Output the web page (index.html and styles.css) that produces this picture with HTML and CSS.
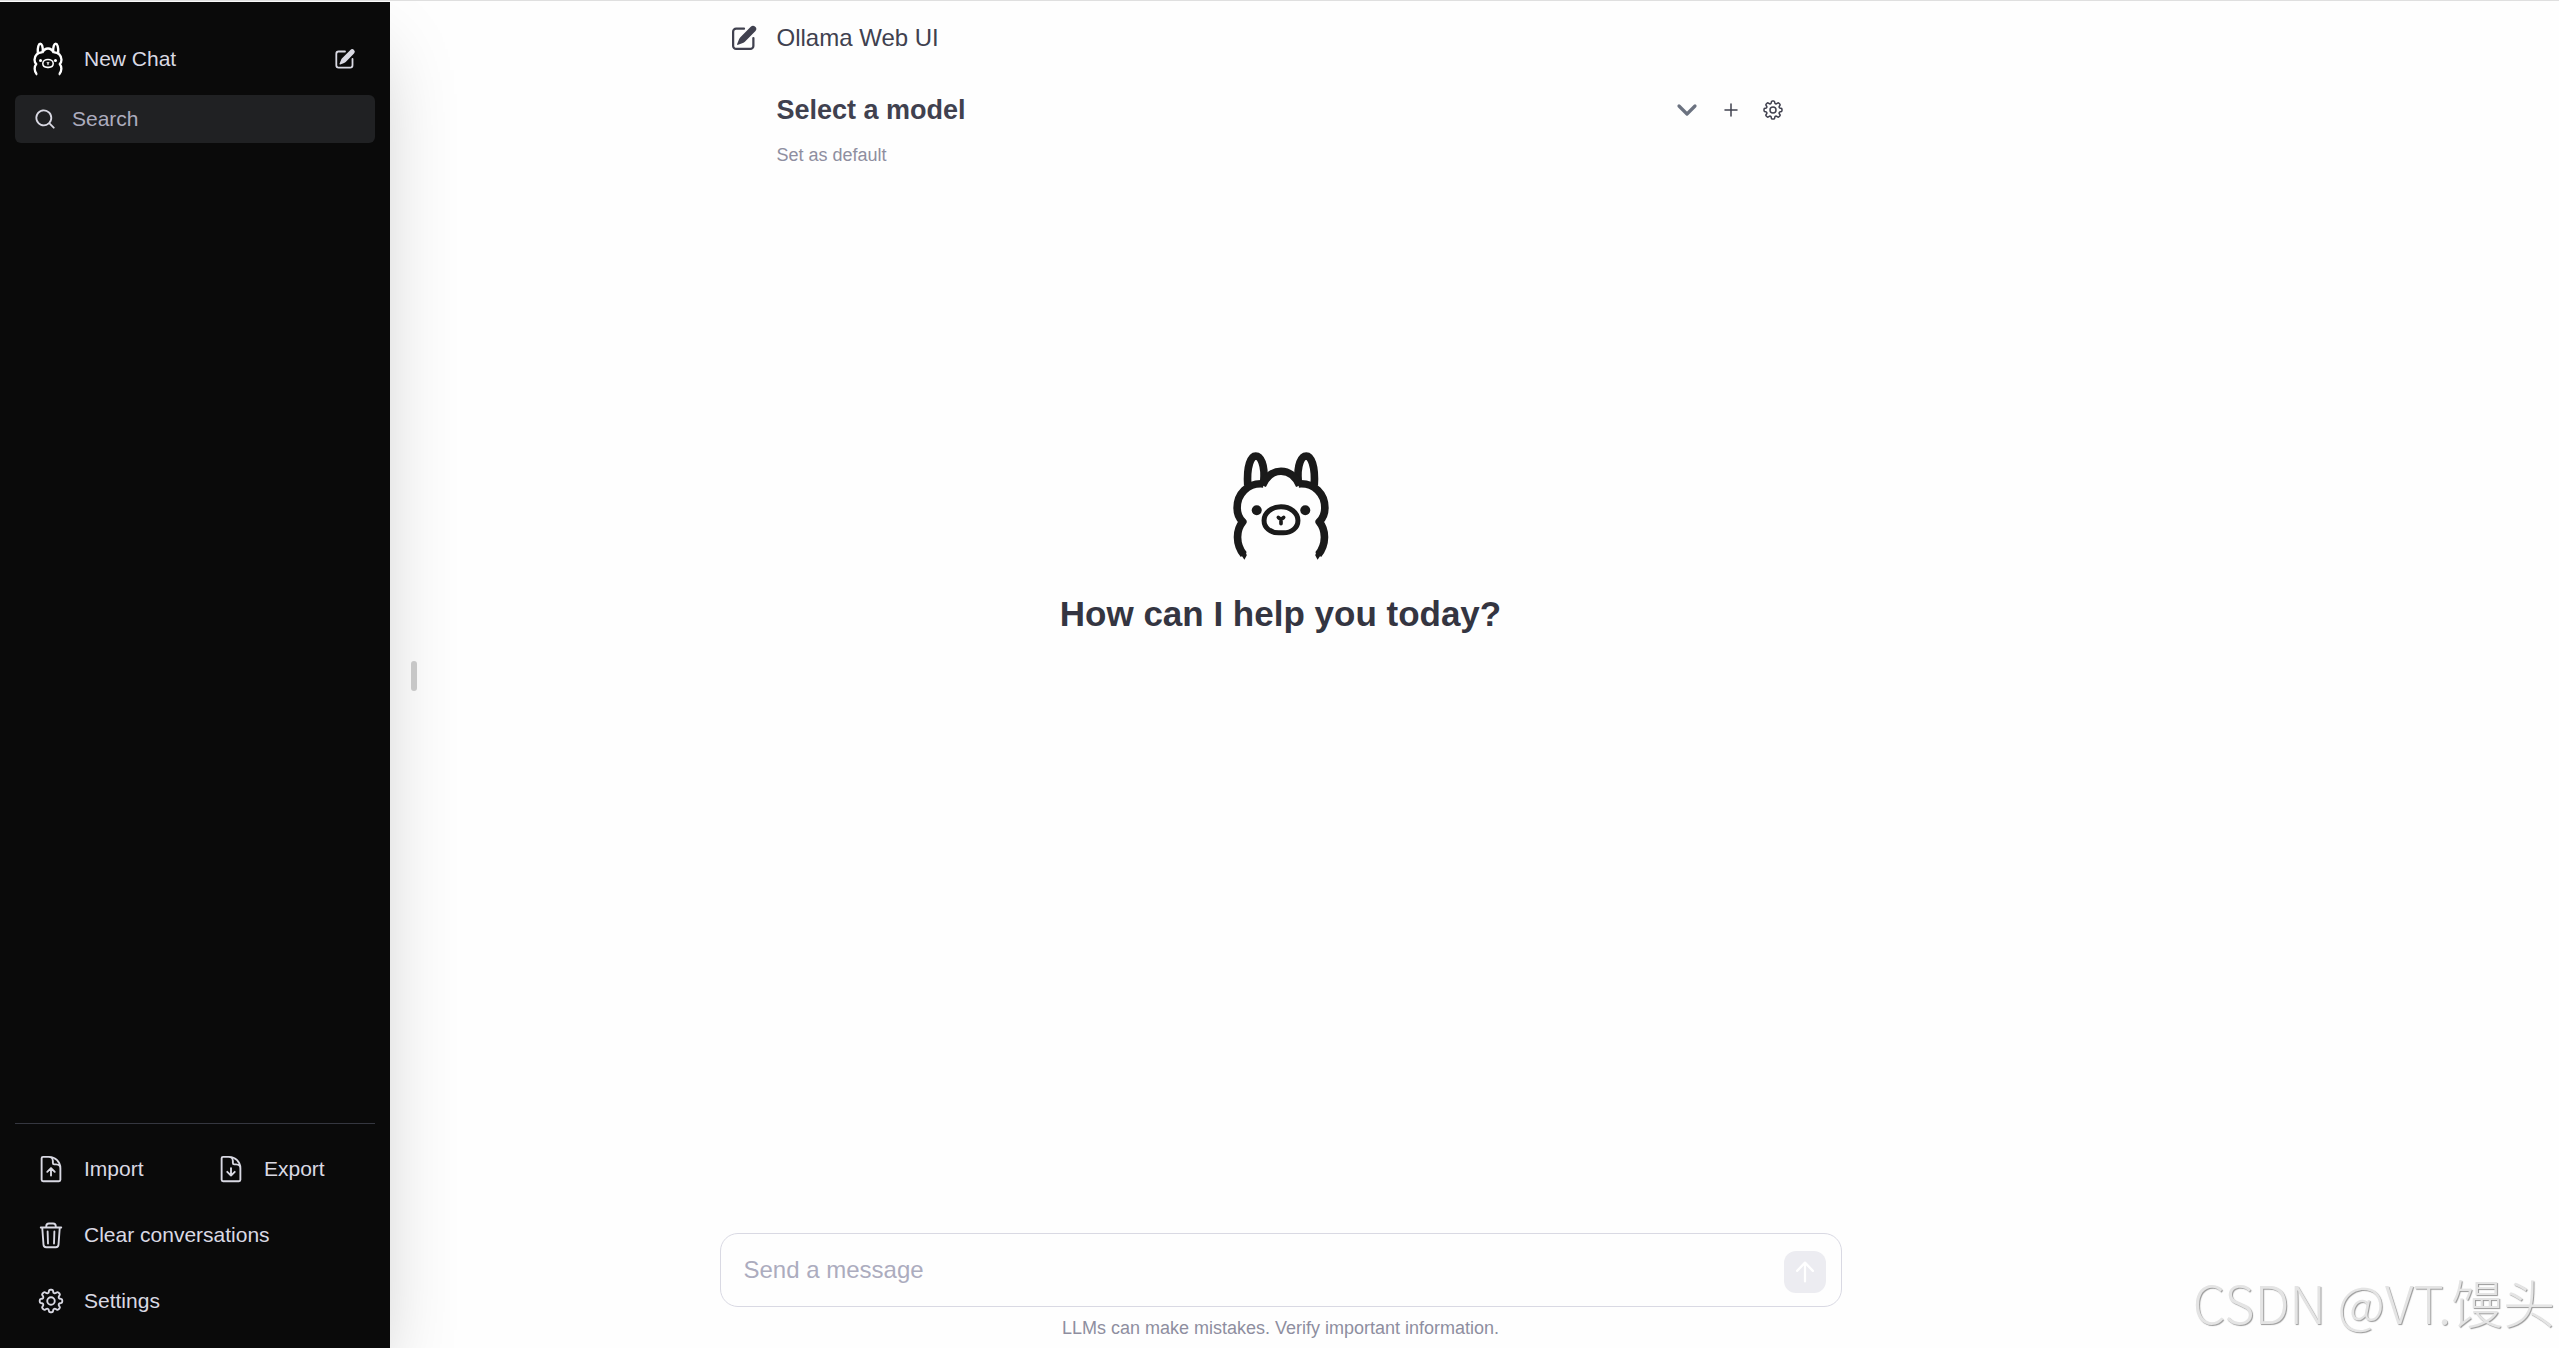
FILE: index.html
```html
<!DOCTYPE html>
<html lang="en">
<head>
    <meta charset="UTF-8">
    <meta name="viewport" content="width=device-width, initial-scale=1.0">
    <title>Ollama Web UI</title>
    <link rel="stylesheet" href="styles.css">
</head>
<body>
    <!-- Shared icons -->
    <svg class="sprite" aria-hidden="true">
        <symbol id="llama" viewBox="576 64 294 328">
            <g fill="none" stroke="currentColor" stroke-width="23" stroke-linejoin="round">
                <path d="M623 168C619 108 633 79 647 79C661 79 676 104 671 158"/>
                <path d="M823 168C827 108 813 79 799 79C785 79 770 104 775 158"/>
                <path d="M667 168C679 140 700 125 723 125C746 125 767 140 779 168"/>
                <path d="M670 163C622 159 591 194 591 235C591 253 597 267 608 277C587 302 586 345 611 376"/>
                <path d="M776 163C824 159 855 194 855 235C855 253 849 267 838 277C859 302 860 345 835 376"/>
                <path stroke-width="15" d="M723 232C695 232 672 250 672 273C672 295 691 310 716 310H730C755 310 774 295 774 273C774 250 751 232 723 232Z"/>
                <path stroke-width="11" stroke-linecap="round" d="M715 264L723 270L731 264M723 270V283"/>
            </g>
            <g fill="currentColor">
                <circle cx="650" cy="242" r="15"/>
                <circle cx="796" cy="242" r="15"/>
                <path d="M601 374L613 391L620 378L616 366ZM845 374L833 391L826 378L830 366Z"/>
            </g>
        </symbol>
        <symbol id="pencil" viewBox="0 0 20 20">
            <path fill="currentColor" d="M5.433 13.917l1.262-3.155A4 4 0 017.58 9.42l6.92-6.918a2.121 2.121 0 013 3l-6.92 6.918c-.383.383-.84.685-1.343.886l-3.154 1.262a.5.5 0 01-.65-.65z"/>
            <path fill="currentColor" d="M3.5 5.75c0-.69.56-1.25 1.25-1.25H10A.75.75 0 0010 3H4.75A2.75 2.75 0 002 5.75v9.5A2.75 2.75 0 004.75 18h9.5A2.75 2.75 0 0017 15.25V10a.75.75 0 00-1.5 0v5.25c0 .69-.56 1.25-1.25 1.25h-9.5c-.69 0-1.25-.56-1.25-1.25v-9.5z"/>
        </symbol>
        <symbol id="cog" viewBox="0 0 24 24">
            <path fill="none" stroke="currentColor" stroke-width="1.5" stroke-linejoin="round" d="M10.343 3.94c.09-.542.56-.94 1.11-.94h1.093c.55 0 1.02.398 1.11.94l.149.894c.07.424.384.764.78.93.398.164.855.142 1.205-.108l.737-.527a1.125 1.125 0 011.45.12l.773.774c.39.389.44 1.002.12 1.45l-.527.737c-.25.35-.272.806-.107 1.204.165.397.505.71.93.78l.893.15c.543.09.94.56.94 1.109v1.094c0 .55-.397 1.02-.94 1.11l-.893.149c-.425.07-.765.383-.93.78-.165.398-.143.854.107 1.204l.527.738c.32.447.269 1.06-.12 1.45l-.774.773a1.125 1.125 0 01-1.449.12l-.738-.527c-.35-.25-.806-.272-1.203-.107-.397.165-.71.505-.781.929l-.149.894c-.09.542-.56.94-1.11.94h-1.094c-.55 0-1.019-.398-1.11-.94l-.148-.894c-.071-.424-.384-.764-.781-.93-.398-.164-.854-.142-1.204.108l-.738.527c-.447.32-1.06.269-1.45-.12l-.773-.774a1.125 1.125 0 01-.12-1.45l.527-.737c.25-.35.273-.806.108-1.204-.165-.397-.505-.71-.93-.78l-.894-.15c-.542-.09-.94-.56-.94-1.109v-1.094c0-.55.398-1.02.94-1.11l.894-.149c.424-.07.765-.383.93-.78.165-.398.143-.854-.107-1.204l-.527-.738a1.125 1.125 0 01.12-1.45l.773-.773a1.125 1.125 0 011.45-.12l.737.527c.35.25.807.272 1.204.107.397-.165.71-.505.78-.929l.15-.894z"/>
            <circle cx="12" cy="12" r="3" fill="none" stroke="currentColor" stroke-width="1.5"/>
        </symbol>
    </svg>

    <div class="app">
        <aside class="sidebar">
            <button class="new-chat">
                <svg class="logo-small"><use href="#llama"/></svg>
                <span>New Chat</span>
                <svg class="icon-sm push"><use href="#pencil"/></svg>
            </button>
            <label class="search">
                <svg class="icon-sm" viewBox="0 0 20 20" fill="currentColor"><path d="M9 3.5a5.5 5.5 0 100 11 5.5 5.5 0 000-11zM2 9a7 7 0 1112.452 4.391l3.328 3.329a.75.75 0 11-1.06 1.06l-3.329-3.328A7 7 0 012 9z"/></svg>
                <input type="text" placeholder="Search" aria-label="Search">
            </label>

            <nav class="menu">
                <div class="menu-row">
                    <button class="menu-item">
                        <svg class="icon line" viewBox="0 0 24 24"><path d="M19.5 14.25v-2.625a3.375 3.375 0 00-3.375-3.375h-1.5A1.125 1.125 0 0113.5 7.125v-1.5a3.375 3.375 0 00-3.375-3.375H8.25m6.75 12l-3-3m0 0l-3 3m3-3v6m-1.5-15H5.625c-.621 0-1.125.504-1.125 1.125v17.25c0 .621.504 1.125 1.125 1.125h12.75c.621 0 1.125-.504 1.125-1.125V11.25a9 9 0 00-9-9z"/></svg>
                        Import
                    </button>
                    <button class="menu-item">
                        <svg class="icon line" viewBox="0 0 24 24"><path d="M19.5 14.25v-2.625a3.375 3.375 0 00-3.375-3.375h-1.5A1.125 1.125 0 0113.5 7.125v-1.5a3.375 3.375 0 00-3.375-3.375H8.25m.75 12l3 3m0 0l3-3m-3 3v-6m-1.5-9H5.625c-.621 0-1.125.504-1.125 1.125v17.25c0 .621.504 1.125 1.125 1.125h12.75c.621 0 1.125-.504 1.125-1.125V11.25a9 9 0 00-9-9z"/></svg>
                        Export
                    </button>
                </div>
                <button class="menu-item">
                    <svg class="icon line" viewBox="0 0 24 24"><path d="M3.8 6H20.2M5 6.2L6 19.7C6.1 21 6.9 21.8 8.1 21.8H15.9C17.1 21.8 17.9 21 18 19.7L19 6.2M8.2 5.8V5C8.2 3.7 9 2.8 10.3 2.8H13.7C15 2.8 15.8 3.7 15.8 5V5.8M9.3 9.2L9.6 18.8M14.7 9.2L14.4 18.8"/></svg>
                    Clear conversations
                </button>
                <button class="menu-item">
                    <svg class="icon"><use href="#cog"/></svg>
                    Settings
                </button>
            </nav>
            <div class="handle"></div>
        </aside>

        <main class="main">
            <div class="column">
                <header class="topbar">
                    <button class="icon-btn" aria-label="New chat"><svg class="icon"><use href="#pencil"/></svg></button>
                    <span class="title">Ollama Web UI</span>
                </header>

                <section class="models">
                    <div class="model-row">
                        <select class="model-select" aria-label="Model">
                            <option>Select a model</option>
                        </select>
                        <button class="icon-btn" aria-label="Add model"><svg class="icon-sm line" viewBox="0 0 24 24"><path d="M12 6v12m6-6H6"/></svg></button>
                        <button class="icon-btn" aria-label="Model settings"><svg class="icon-sm"><use href="#cog"/></svg></button>
                    </div>
                    <button class="default-btn">Set as default</button>
                </section>

                <section class="hero">
                    <svg class="logo"><use href="#llama"/></svg>
                    <h1>How can I help you today?</h1>
                </section>

                <form class="composer">
                    <input type="text" placeholder="Send a message" aria-label="Send a message">
                    <button type="button" class="send" aria-label="Send"><svg class="icon" viewBox="0 0 20 20" fill="currentColor"><path fill-rule="evenodd" d="M10 17a.75.75 0 01-.75-.75V5.612L5.29 9.77a.75.75 0 01-1.08-1.04l5.25-5.5a.75.75 0 011.08 0l5.25 5.5a.75.75 0 11-1.08 1.04l-3.96-4.158V16.25A.75.75 0 0110 17z"/></svg></button>
                </form>
                <p class="note">LLMs can make mistakes. Verify important information.</p>
            </div>
        </main>
    </div>

    <div class="watermark">CSDN @VT.馒头</div>
</body>
</html>
```
FILE: styles.css
```css
:root {
    --sidebar: 390px;
    --light: #d9d9e3;
    --muted: #8e8ea0;
    --text: #40414f;
}

* {
    box-sizing: border-box;
}

body {
    margin: 0;
    font-family: "Liberation Sans", Arial, sans-serif;
    background: #fefefe;
    color: var(--text);
    border-top: 1px solid #dfdfdf;
}

button, input, select {
    font: inherit;
    color: inherit;
    background: none;
    border: none;
    padding: 0;
    outline: none;
}

button {
    display: flex;
    align-items: center;
    cursor: pointer;
}

svg {
    display: block;
    flex: none;
}

.sprite {
    position: absolute;
    width: 0;
    height: 0;
}

.icon {
    width: 30px;
    height: 30px;
}

.icon-sm {
    width: 24px;
    height: 24px;
}

.line {
    fill: none;
    stroke: currentColor;
    stroke-width: 1.5;
    stroke-linecap: round;
    stroke-linejoin: round;
}

.app {
    display: flex;
    height: calc(100vh - 1px);
    padding-top: 1px;
    overflow: hidden;
}

/* Sidebar */
.sidebar {
    position: relative;
    z-index: 1;
    display: flex;
    flex-direction: column;
    flex: none;
    width: var(--sidebar);
    padding: 24px 15px 14px;
    background: #0a0a0a;
    color: var(--light);
    font-size: 21px;
    box-shadow: 0 37px 75px -18px rgba(0, 0, 0, 0.25);
}

.new-chat {
    height: 66px;
    padding: 0 18px;
    gap: 21px;
    font-weight: 500;
}

.logo-small {
    width: 30px;
    height: 36px;
    color: #fff;
}

.push {
    margin-left: auto;
}

.search {
    display: flex;
    align-items: center;
    gap: 15px;
    height: 48px;
    margin-top: 3px;
    padding: 0 18px;
    border-radius: 6px;
    background: #202123;
}

.search input {
    flex: 1;
    min-width: 0;
}

.search input::placeholder {
    color: #acacbe;
    opacity: 1;
}

.menu {
    margin-top: auto;
    padding-top: 12px;
    border-top: 1px solid #353740;
}

.menu-row {
    display: grid;
    grid-template-columns: 1fr 1fr;
}

.menu-item {
    height: 66px;
    padding: 0 21px;
    gap: 18px;
}

/* Drag handle beside the sidebar */
.handle {
    position: absolute;
    top: calc(50% - 14px);
    left: calc(100% + 21px);
    width: 6px;
    height: 30px;
    border-radius: 3px;
    background: #c7c7c7;
}

/* Chat area */
.main {
    flex: 1;
    display: flex;
    justify-content: center;
    padding-right: calc(var(--sidebar) - 2px);
}

.column {
    flex: 1;
    display: flex;
    flex-direction: column;
    max-width: 1152px;
    padding: 0 15px;
}

.topbar {
    display: flex;
    align-items: center;
    gap: 18px;
    height: 72px;
    padding-left: 9px;
}

.title {
    font-size: 24px;
}

.models {
    padding: 12px 57px 0;
}

.model-row {
    display: flex;
    align-items: center;
    gap: 18px;
    height: 48px;
}

.model-select {
    flex: 1;
    height: 48px;
    margin-right: -6px;
    font-size: 27px;
    font-weight: bold;
    appearance: none;
    background: url("data:image/svg+xml,%3Csvg xmlns='http://www.w3.org/2000/svg' fill='none' viewBox='0 0 20 20'%3E%3Cpath stroke='%236b7280' stroke-linecap='round' stroke-linejoin='round' stroke-width='1.6' d='M6 8l4 4 4-4'/%3E%3C/svg%3E") no-repeat right center / 40px;
}

.default-btn {
    margin-top: 9px;
    font-size: 18px;
    line-height: 24px;
    color: var(--muted);
}

.hero {
    flex: 1;
    display: flex;
    flex-direction: column;
    align-items: center;
    padding-top: 284px;
}

.logo {
    width: 98px;
    height: 109px;
    color: #1a1a1a;
}

.hero h1 {
    margin: 30px 0 0;
    font-size: 35px;
    line-height: 48px;
    color: #343541;
}

.composer {
    display: flex;
    align-items: center;
    height: 74px;
    padding: 4px 15px 0 23px;
    border: 1px solid var(--light);
    border-radius: 18px;
    font-size: 24px;
}

.composer input {
    flex: 1;
    min-width: 0;
    height: 100%;
    padding-bottom: 4px;
}

.composer input::placeholder {
    color: #acacbe;
    opacity: 1;
}

.send {
    justify-content: center;
    width: 42px;
    height: 42px;
    border-radius: 12px;
    background: #ececf1;
    color: #fff;
}

.note {
    margin: 9px 0 8px;
    font-size: 18px;
    line-height: 24px;
    text-align: center;
    color: var(--muted);
}

.watermark {
    position: fixed;
    right: 4px;
    bottom: 14px;
    font-family: "Noto Sans CJK SC", sans-serif;
    font-size: 52px;
    font-weight: 300;
    line-height: 64px;
    color: #e4e4e4;
    text-shadow: 1px 1px 1px #999;
    pointer-events: none;
}
```
